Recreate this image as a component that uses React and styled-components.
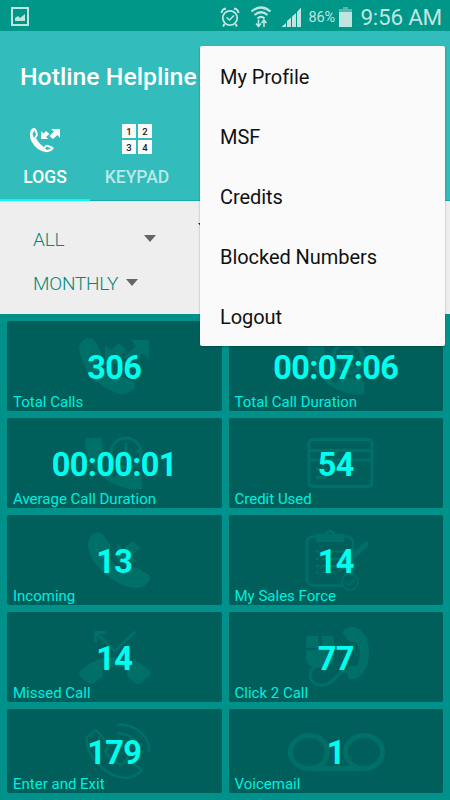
import React from 'react';
import styled, { createGlobalStyle } from 'styled-components';

const GlobalStyle = createGlobalStyle`
  * {
    box-sizing: border-box;
  }

  body {
    margin: 0;
    font-family: Roboto, sans-serif;
    overflow: hidden;
  }
`;

const Screen = styled.div`
  position: relative;
  display: flex;
  flex-direction: column;
  width: 450px;
  height: 800px;
  overflow: hidden;
  background: #00918b;
`;

const StatusBar = styled.div`
  display: flex;
  align-items: center;
  justify-content: space-between;
  height: 31px;
  padding: 2px 8px 0 11px;
  background: #009688;
  color: #bfe5e1;

  svg {
    display: block;
  }
`;

const StatusGroup = styled.div`
  display: flex;
  align-items: center;
`;

const Battery = styled.span`
  width: 28px;
  margin: 1px 3px 0 6px;
  font-size: 14.5px;
  letter-spacing: -0.1px;
  white-space: nowrap;
`;

const Clock = styled.span`
  margin-left: 8px;
  font-size: 22.5px;
  line-height: 28px;
  letter-spacing: -0.25px;
  white-space: nowrap;
`;

const Header = styled.header`
  height: 170px;
  background: #32bcbb;
  border-bottom: 1px solid #12acaa;
`;

const Title = styled.h1`
  height: 92px;
  margin: 0;
  padding-left: 20px;
  font-size: 24.8px;
  font-weight: 500;
  line-height: 92px;
  color: #fff;
  white-space: nowrap;
`;

const Tabs = styled.nav`
  display: flex;
`;

const Tab = styled.div`
  display: flex;
  flex-direction: column;
  align-items: center;
  width: ${(props) => props.$width}px;
  height: 78px;
  border-bottom: 2px solid ${(props) => (props.$active ? '#00fff0' : 'transparent')};
  color: ${(props) => (props.$active ? '#fff' : '#b9e8e7')};
  font-size: 17.5px;
  font-weight: 500;
  line-height: 20px;

  svg {
    display: block;
    margin: 2px 0 14px;
  }
`;

const KeyGrid = styled.div`
  display: grid;
  grid-template-columns: 14px 14px;
  gap: 2px;
  margin: 1px 0 13px;
`;

const Key = styled.span`
  height: 14px;
  background: #fafafa;
  color: #222;
  font-size: 9.5px;
  line-height: 15px;
  text-align: center;
`;

const Filters = styled.div`
  display: flex;
  flex-direction: column;
  height: 113px;
  padding: 16px 33px 0;
  background: #eee;
`;

const FilterRow = styled.div`
  display: flex;
  gap: 42px;
`;

const Filter = styled.div`
  display: flex;
  align-items: center;
  justify-content: space-between;
  width: ${(props) => props.$width}px;
  height: 44px;
  color: #00897b;
  font-size: 19px;
  font-weight: 300;
  letter-spacing: -0.2px;
`;

const Caret = styled.span`
  border: 6px solid transparent;
  border-top: 7px solid #656565;
  border-bottom: 0;
  margin-top: -1px;
`;

const SortCaret = styled(Caret)`
  margin-top: 6px;
  align-self: flex-start;
  border-top-color: #222;
`;

const StatGrid = styled.main`
  flex: 1;
  display: grid;
  grid-template-columns: 1fr 1fr;
  grid-template-rows: repeat(4, 90px) 84px;
  gap: 7px;
  padding: 7px;
`;

const Card = styled.section`
  position: relative;
  display: flex;
  align-items: center;
  justify-content: center;
  border-radius: 2px;
  background: #005f5a;
  color: #00ffef;
`;

const Watermark = styled.svg`
  position: absolute;
  top: 0;
  left: 0;
  color: #006f68;
`;

const Value = styled.strong`
  position: relative;
  padding-top: 3px;
  font-size: 32.5px;
  font-weight: 700;
  line-height: 38px;
  letter-spacing: -0.65px;
`;

const Label = styled.span`
  position: absolute;
  left: 6px;
  bottom: 0;
  font-size: 15px;
  line-height: 18px;
  color: #00eedf;
`;

const Menu = styled.div`
  position: absolute;
  top: 46px;
  left: 200px;
  width: 245px;
  height: 300px;
  border-radius: 2px;
  background: #fafafa;
  box-shadow: 0 1px 2px rgba(0, 60, 56, 0.45);
`;

const MenuItem = styled.div`
  height: 60px;
  padding: 1px 0 0 20px;
  color: #111;
  font-size: 20px;
  line-height: 60px;
  letter-spacing: -0.05px;
`;

const HandsetIncoming = 'M72 27Q74 17 82 17Q86 17 89 22L94 31Q95 34 92 37Q89 40 93 45Q101 55 106 58Q109 59 112 57Q115 55 119 57L126 61Q130 64 127 68Q121 74 113 73Q96 68 84 55Q73 40 72 27Z';
const HandsetBlock = 'M80 20H92Q95 20 95 23L97 35Q97 38 94 40L91 43Q97 54 107 60L112 55Q114 53 117 54L132 57Q135 58 135 61V71Q120 74 100 62Q79 46 78 23Q78 20 80 20Z';

const icons = {
  total: (
    <g fill="currentColor">
      <path d={HandsetIncoming} />
      <path d="M98 24L104 29L112 22L119 29L110 38L116 43H98Z" />
      <path d="M124 19H142V38L136 32L124 43L117 36L129 25Z" />
    </g>
  ),
  duration: (
    <>
      <path d={HandsetBlock} fill="currentColor" transform="translate(0 2)" />
      <g fill="none" stroke="currentColor" strokeWidth="4">
        <circle cx="119" cy="37" r="15" />
        <path d="M112 31H123V38H115V44H125" strokeWidth="3" />
      </g>
    </>
  ),
  average: (
    <>
      <path d={HandsetBlock} fill="currentColor" />
      <circle cx="119" cy="35" r="15" fill="#005f5a" stroke="currentColor" strokeWidth="3" />
      <path d="M119 25V36L126 41" fill="none" stroke="currentColor" strokeWidth="3" />
      <path d="M129 32H137L133 39Z" fill="currentColor" />
    </>
  ),
  credit: (
    <g fill="none" stroke="currentColor" strokeWidth="3">
      <rect x="80" y="21.5" width="63" height="47" rx="4" />
      <path d="M80 32.5H143M80 42H143M87 51H98M87 59.5H98" />
    </g>
  ),
  incoming: (
    <g fill="currentColor">
      <path d="M81 29Q82 19 90 17.5Q94 17 97 21L103 29Q105 32 102 36Q99 40 103 45Q110 53 117 56Q120 57 123 54Q126 51 130 53L139 58Q145 61 142 66Q138 73 128 73Q113 72 97 58Q81 43 81 29Z" />
      <path d="M110 29L116 34L126 26L133 33L124 41L131 47H110Z" />
    </g>
  ),
  missed: (
    <>
      <path d="M88.5 29V20.5H98M89 21L108 39L127.5 20.5" fill="none" stroke="currentColor" strokeWidth="3" strokeLinecap="round" />
      <path d="M72 60Q87 45 108 45Q129 45 144 60Q144 63 142 64L134 71Q131 73 128 71L122 66Q120 64 120 61V56Q108 53 96 56V61Q96 64 94 66L87 71Q84 73 81 71L73 64Q72 62 72 60Z" fill="currentColor" />
    </>
  ),
  sales: (
    <>
      <rect x="78" y="21.5" width="46" height="49" rx="6" fill="none" stroke="currentColor" strokeWidth="2.5" />
      <path d="M87 19H96Q97 15 101 15Q105 15 106 19H115V27H87Z" fill="currentColor" />
      <circle cx="101" cy="18.5" r="1.5" fill="#005f5a" />
      <path d="M86.5 36.5H90M93 36.5H118M86.5 44H90M93 44H118M86.5 51H90M93 51H115M86.5 57.5H90M93 57.5H106" stroke="currentColor" strokeWidth="2" />
      <path d="M134 28.5Q137 25 139 28Q140 31 137 33L115 54L108 58L111 50Z" fill="currentColor" />
      <circle cx="121" cy="67" r="8" fill="#005f5a" stroke="currentColor" strokeWidth="1.5" />
      <path d="M116.5 67L120 70L126 64" fill="none" stroke="currentColor" strokeWidth="1.5" />
    </>
  ),
  click: (
    <>
      <path d="M79 24H89V36H77V26Q77 24 79 24ZM93 24H102Q105 24 105 27V36H93ZM77 38H105V48Q103 56 91 56Q79 56 77 48Z" fill="currentColor" />
      <path d="M118 60C111 55 106 72 95 73C80 74 77 60 86 55" fill="none" stroke="currentColor" strokeWidth="3" />
      <path d="M113 20Q120 14 126 15Q140 21 140 41Q140 58 127 67H121Q118 65 118 61L119 56Q121 53 128 54Q134 42 127 30Q121 31 119 28Z" fill="currentColor" />
    </>
  ),
  exit: (
    <g fill="none" stroke="currentColor" strokeWidth="2.5">
      <path d="M89 21L80 28C77 45 100 69 119 69Q127 69 135 61L122 51L114 56Q105 53 98 42L102 36Z" strokeLinejoin="round" />
      <path d="M110 15.5C130 15 143 28 142 43M110 24.5C123 24 133 33 133 43M102 37Q111 30 119 38Q126 46 116 54" />
    </g>
  ),
  voicemail: (
    <g fill="none" stroke="currentColor" strokeWidth="5">
      <ellipse cx="80" cy="43" rx="18.5" ry="16.5" />
      <ellipse cx="135" cy="43" rx="18.5" ry="16.5" />
      <path d="M80 59.5H135" />
    </g>
  ),
};

const stats = [
  { icon: 'total', value: '306', label: 'Total Calls' },
  { icon: 'duration', value: '00:07:06', label: 'Total Call Duration' },
  { icon: 'average', value: '00:00:01', label: 'Average Call Duration' },
  { icon: 'credit', value: '54', label: 'Credit Used' },
  { icon: 'incoming', value: '13', label: 'Incoming' },
  { icon: 'sales', value: '14', label: 'My Sales Force' },
  { icon: 'missed', value: '14', label: 'Missed Call' },
  { icon: 'click', value: '77', label: 'Click 2 Call' },
  { icon: 'exit', value: '179', label: 'Enter and Exit' },
  { icon: 'voicemail', value: '1', label: 'Voicemail' },
];

const menuItems = ['My Profile', 'MSF', 'Credits', 'Blocked Numbers', 'Logout'];

const PictureIcon = () => (
  <svg width="18" height="19" viewBox="0 0 18 19">
    <path d="M1 1H17V18H1Z" fill="none" stroke="currentColor" strokeWidth="2" />
    <path d="M4 14V11L7 9L9 11L14 7V14Z" fill="currentColor" />
  </svg>
);

const StatusIcons = () => (
  <svg width="82" height="24" viewBox="0 0 82 24" fill="none" stroke="currentColor">
    <circle cx="10" cy="13" r="7.2" strokeWidth="1.8" />
    <path d="M6.5 12.5L9.5 15L14 10.5" strokeWidth="1.6" />
    <path d="M1.5 8Q2 4 6 3.5M14 3.5Q18 4 18.5 8M4.5 19L3 21.5M15.5 19L17 21.5" strokeWidth="2" />
    <path d="M31.5 6.5Q41 -1.5 50.5 6.5M34.5 10Q41 4.5 47.5 10M37.5 13.3Q41 10.5 44.5 13.3" strokeWidth="2.2" />
    <path d="M38.5 14.5V21M36 18.5L38.5 21.5L41 18.5M44 22V15.5M41.5 18L44 15L46.5 18" strokeWidth="1.6" />
    <path d="M61.5 22L66 18V22ZM67 22V16L71 12.5V22ZM72 22V11.5L76 8V22ZM77 22V7L81 2.5V22Z" fill="currentColor" stroke="none" />
  </svg>
);

const BatteryIcon = () => (
  <svg width="13" height="20" viewBox="0 0 13 20">
    <path d="M4 0H9V2H13V5H0V2H4Z" fill="#58b8ae" />
    <path d="M0 5H13V20H0Z" fill="currentColor" />
  </svg>
);

const LogsIcon = () => (
  <svg width="32" height="28" viewBox="0 0 32 28" fill="#fafafa">
    <path d="M1 8Q2 3 5 3Q7 3 8 6L9 10Q8 12 7 13Q10 19 15 22Q17 19 19 20L24 22Q26 24 22 26Q16 29 9 24Q0 17 1 8Z" />
    <path d="M3.5 9L5.5 5.5L7 9.5L5 13ZM16 23.5L18 21.5L22 23.5L18 25Z" fill="#32bcbb" />
    <path d="M12 6L14.5 8.5L17 6L20.5 9L17 12L19.5 14H12ZM22 4H31V13L28.5 10L24 14L20.5 11L25 6.5Z" />
  </svg>
);

const App = () => {
  return (
    <Screen>
      <GlobalStyle />
      <StatusBar>
        <PictureIcon />
        <StatusGroup>
          <StatusIcons />
          <Battery>86%</Battery>
          <BatteryIcon />
          <Clock>9:56 AM</Clock>
        </StatusGroup>
      </StatusBar>
      <Header>
        <Title>Hotline Helpline</Title>
        <Tabs>
          <Tab $width={90} $active>
            <LogsIcon />
            LOGS
          </Tab>
          <Tab $width={94}>
            <KeyGrid>
              {[1, 2, 3, 4].map((n) => (
                <Key key={n}>{n}</Key>
              ))}
            </KeyGrid>
            KEYPAD
          </Tab>
        </Tabs>
      </Header>
      <Filters>
        <FilterRow>
          <Filter $width={123}>
            ALL
            <Caret />
          </Filter>
          <SortCaret />
        </FilterRow>
        <Filter $width={105}>
          MONTHLY
          <Caret />
        </Filter>
      </Filters>
      <StatGrid>
        {stats.map(({ icon, value, label }) => (
          <Card key={label}>
            <Watermark width="214" height="90" viewBox="0 0 214 90">
              {icons[icon]}
            </Watermark>
            <Value>{value}</Value>
            <Label>{label}</Label>
          </Card>
        ))}
      </StatGrid>
      <Menu>
        {menuItems.map((item) => (
          <MenuItem key={item}>{item}</MenuItem>
        ))}
      </Menu>
    </Screen>
  );
};

export default App;
